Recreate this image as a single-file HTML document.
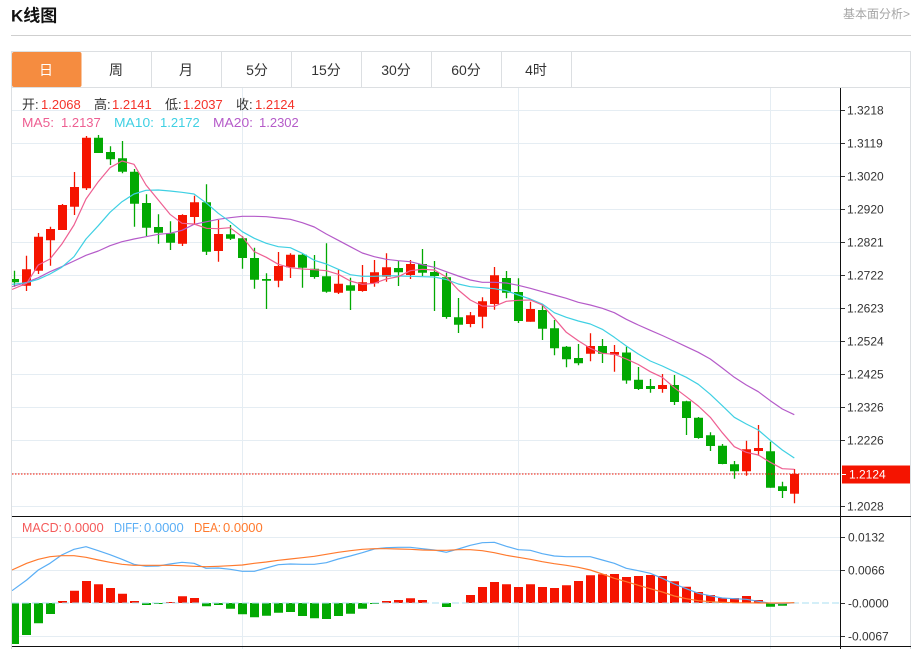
<!DOCTYPE html>
<html lang="zh">
<head>
<meta charset="utf-8">
<title>K线图</title>
<style>
html,body{margin:0;padding:0;background:#fff;}
body{width:918px;height:649px;overflow:hidden;position:relative;}
svg{position:absolute;left:0;top:0;display:block;}
text{font-family:"Liberation Sans","Noto Sans CJK SC",sans-serif;}
</style>
</head>
<body>
<svg width="918" height="649" viewBox="0 0 918 649" xmlns="http://www.w3.org/2000/svg">
<defs><clipPath id="p"><rect x="12" y="88" width="828" height="561"/></clipPath></defs>

<text x="11" y="21.5" font-size="17" font-weight="700" fill="#111">K线图</text>
<text x="843" y="18" font-size="12" fill="#a5a5a5">基本面分析&gt;</text>
<path d="M11 35.5H911" stroke="#cfcfcf" fill="none"/>

<!-- frame and tabs -->
<path d="M11.5 649V51.5H910.5V649M11.5 87.5H910.5M151.5 52V87M221.5 52V87M291.5 52V87M361.5 52V87M431.5 52V87M501.5 52V87M571.5 52V87" stroke="#dcdfe2" fill="none"/>
<rect x="12" y="52" width="69.5" height="35" rx="2" fill="#f58c40"/>
<g font-size="14" fill="#333" text-anchor="middle">
<text x="46" y="75" fill="#fff">日</text>
<text x="116" y="75">周</text>
<text x="186" y="75">月</text>
<text x="257" y="75">5分</text>
<text x="326" y="75">15分</text>
<text x="396" y="75">30分</text>
<text x="466" y="75">60分</text>
<text x="536" y="75">4时</text>
</g>

<!-- grid -->
<path d="M12 110.5H840M12 143.5H840M12 176.5H840M12 209.5H840M12 242.5H840M12 275.5H840M12 308.5H840M12 341.5H840M12 374.5H840M12 407.5H840M12 440.5H840M12 473.5H840M12 506.5H840M12 537.5H840M12 570.5H840M12 636.5H840M242.5 88V649M518.5 88V649M770.5 88V649" stroke="#e5edf3" fill="none"/>

<g clip-path="url(#p)">
<!-- wicks -->
<path fill="none" stroke="#f51400" stroke-width="1.3" d="M26.5 255.7V291M38.5 233V274M50.5 226.7V265.7M62.5 204V230M74.5 172V215M86.5 136V190M182.5 214.3V246M194.5 195.7V225M218.5 220V261.7M278.5 252V287.3M290.5 253.3V278M338.5 269.7V294M362.5 265V291.7M374.5 260V286.7M386.5 253.3V281.7M410.5 260V279M470.5 312V327.3M482.5 297.3V328.3M494.5 267V309.7M530.5 301.7V321.7M590.5 333.3V361.3M614.5 345V371.7M662.5 374V392.7M746.5 440.7V475.7M758.5 425V455.7M794.5 469V503.3"/>
<path fill="none" stroke="#02a902" stroke-width="1.3" d="M14.5 270.7V286.7M98.5 135V153M110.5 146.3V165M122.5 141V173.3M134.5 169V226.7M146.5 194.3V236M158.5 214.3V243.7M170.5 221.3V250M206.5 184.3V255M230.5 225V240M242.5 236V268.7M254.5 247.7V288.7M266.5 273.3V309M302.5 254V287.7M314.5 255V278.7M326.5 243.3V292.7M350.5 277.7V310M398.5 261V286M422.5 249V276M434.5 261V311M446.5 272.7V318.7M458.5 298V333M506.5 271V298.3M518.5 278.3V323M542.5 305V340M554.5 320V355.3M566.5 346V367.3M578.5 344V365.3M602.5 339V363M626.5 346.7V383.7M638.5 367V390M650.5 379V392.7M674.5 375V405M686.5 400.7V435M698.5 417V438.7M710.5 432.3V451M722.5 444V464.3M734.5 461V478.7M770.5 441.7V487.7M782.5 481.7V498"/>
<!-- bodies -->
<path fill="#f51400" d="M22 269.3h9V285.7h-9zM34 236.7h9V270.7h-9zM46 229h9V240.3h-9zM58 205h9V230h-9zM70 187h9V206.7h-9zM82 137.7h9V188.3h-9zM178 215h9V243.7h-9zM190 202.3h9V217h-9zM214 234h9V251h-9zM274 266h9V280.7h-9zM286 254.7h9V267.3h-9zM334 283.7h9V292.7h-9zM358 282.3h9V291h-9zM370 272.3h9V283.3h-9zM382 267.3h9V276.7h-9zM406 264h9V275h-9zM466 315.3h9V324h-9zM478 301.3h9V316.7h-9zM490 275.3h9V304h-9zM526 309h9V321.7h-9zM586 346h9V353.7h-9zM610 352h9V354.7h-9zM658 385h9V389h-9zM742 449.3h9V471.3h-9zM754 448h9V451h-9zM790 474h9V493.7h-9z"/>
<path fill="#02a902" d="M10 279h9V282.3h-9zM94 137.7h9V153h-9zM106 152h9V159.3h-9zM118 158.3h9V171.7h-9zM130 171.7h9V203.7h-9zM142 203h9V227.7h-9zM154 227h9V232.7h-9zM166 233.3h9V242.7h-9zM202 202.3h9V251.7h-9zM226 234.3h9V238.7h-9zM238 238.3h9V258h-9zM250 258h9V279.7h-9zM262 279h9V280.7h-9zM298 254.7h9V267.7h-9zM310 268.7h9V277h-9zM322 276.3h9V291.7h-9zM346 285.3h9V290.7h-9zM394 268h9V272.3h-9zM418 264h9V272.7h-9zM430 272h9V276h-9zM442 277.3h9V317h-9zM454 317.3h9V324.7h-9zM502 278h9V292.7h-9zM514 292h9V321h-9zM538 310h9V328.7h-9zM550 328.3h9V348.3h-9zM562 346.7h9V359.3h-9zM574 358h9V363.3h-9zM598 346h9V353.7h-9zM622 352.5h9V380.5h-9zM634 379.7h9V389h-9zM646 386h9V389h-9zM670 385h9V402h-9zM682 401.3h9V418h-9zM694 417.7h9V438h-9zM706 435.3h9V446h-9zM718 445.7h9V464h-9zM730 464.3h9V471.3h-9zM766 451.3h9V487.7h-9zM778 486.3h9V491h-9z"/>
<!-- MA -->
<g fill="none" stroke-width="1.2" stroke-linejoin="round">
<polyline stroke="#b55bc9" points="12,286.7 26.7,282.3 38.3,277.7 50,271.7 61.7,266.7 74,261 86,255.3 98.3,251 110,245.7 122,241.7 134,239 146,236.7 158.3,234.3 170,233.3 182,230.3 194,224.3 206.7,221.7 218.3,219.3 230,217.7 242.3,216.3 254.3,216.3 266.3,216.7 278.3,218 290.3,219.3 302.3,222.7 314.3,227 326.3,234 338.3,240.3 350.3,246.7 362.3,253 374.3,256.7 386.3,259.3 398.3,260.7 410.3,261.7 422.3,264.7 434.3,267.3 446.3,271.7 458.3,276 470.3,280 482.3,282.3 494.3,282.3 506.3,283 518.3,285.3 530.3,288.3 542.3,291.7 554.3,295 566.3,298.3 578.3,302.3 590.3,305 602.3,308.3 614.3,312.7 626.3,319.3 638.3,325 650.3,330.3 662.3,335.5 674.3,341 686.3,346.7 698.3,352.3 710.3,359 722.3,368 734.3,377.3 746.3,385 758.3,391.7 770.3,400.7 782.3,409 794.3,414.7"/>
<polyline stroke="#3fd0e3" points="12,284.3 26.7,282.7 38.3,279.3 50,274 61.7,267.3 74,256.7 86,239 98.3,225.7 110,212.3 122,201.7 134,194 146,190.3 158.3,190 170,191 182,192.3 194,194 206.7,203.3 218.3,213.3 230,221.7 242.3,231.7 254.3,238.3 266.3,243.3 278.3,246.7 290.3,247.7 302.3,253.3 314.3,260.3 326.3,264 338.3,269.3 350.3,274.7 362.3,276.3 374.3,276.3 386.3,275.7 398.3,276 410.3,276.3 422.3,276.7 434.3,277 446.3,279.5 458.3,284 470.3,286.7 482.3,287.7 494.3,288.7 506.3,290.7 518.3,295 530.3,299 542.3,304 554.3,312.7 566.3,317.3 578.3,321 590.3,324 602.3,329.3 614.3,337.3 626.3,346 638.3,354 650.3,361 662.3,366 674.3,371.7 686.3,377.3 698.3,384.3 710.3,394.3 722.3,405.7 734.3,417.3 746.3,424 758.3,430 770.3,440.3 782.3,450 794.3,458"/>
<polyline stroke="#ee5f92" points="12,289.5 26.7,283.3 38.3,265 50,259 61.7,244.3 74,225 86,199 98.3,181.7 110,167.7 122,161 134,164.3 146,185 158.3,200 170,214.3 182,223.3 194,224 206.7,228.3 218.3,228.7 230,227.7 242.3,236.7 254.3,251.7 266.3,257.3 278.3,264.3 290.3,267.7 302.3,269 314.3,269.7 326.3,270.7 338.3,274.3 350.3,281 362.3,284.3 374.3,283.3 386.3,279 398.3,276.7 410.3,270.7 422.3,269.3 434.3,270 446.3,277 458.3,290 470.3,300 482.3,306 494.3,306.3 506.3,301.3 518.3,300.3 530.3,300 542.3,305 554.3,318.3 566.3,332.3 578.3,340.7 590.3,348.3 602.3,353.3 614.3,354.3 626.3,359 638.3,364.5 650.3,371.7 662.3,377.3 674.3,387.7 686.3,396.7 698.3,406 710.3,417.3 722.3,432.7 734.3,446.7 746.3,452.3 758.3,455 770.3,462.3 782.3,468.7 794.3,469.3"/>
</g>
<!-- current price -->
<path d="M12 474H840" stroke="#f51400" stroke-dasharray="1.5 1.5" fill="none"/>

<!-- MACD -->
<path fill="#f51400" d="M58 601h9V603h-9zM70 590.7h9V603h-9zM82 581h9V603h-9zM94 584.3h9V603h-9zM106 588h9V603h-9zM118 593.7h9V603h-9zM130 601h9V603h-9zM166 602h9V603h-9zM178 596.3h9V603h-9zM190 598h9V603h-9zM382 601h9V603h-9zM394 600h9V603h-9zM406 598.3h9V603h-9zM418 600h9V603h-9zM466 595h9V603h-9zM478 587h9V603h-9zM490 582h9V603h-9zM502 584.3h9V603h-9zM514 587h9V603h-9zM526 584.3h9V603h-9zM538 587h9V603h-9zM550 588h9V603h-9zM562 585.3h9V603h-9zM574 581h9V603h-9zM586 575.3h9V603h-9zM598 574.3h9V603h-9zM610 574h9V603h-9zM622 577h9V603h-9zM634 576h9V603h-9zM646 575h9V603h-9zM658 576h9V603h-9zM670 581.3h9V603h-9zM682 586.7h9V603h-9zM694 592h9V603h-9zM706 595h9V603h-9zM718 598h9V603h-9zM730 598h9V603h-9zM742 596h9V603h-9zM754 600h9V603h-9z"/>
<path fill="#02a902" d="M12 603h7V644h-7zM22 603h9V635h-9zM34 603h9V623.3h-9zM46 603h9V614h-9zM142 603h9V605h-9zM154 603h9V604h-9zM202 603h9V606.3h-9zM214 603h9V605h-9zM226 603h9V608.7h-9zM238 603h9V614.3h-9zM250 603h9V617.3h-9zM262 603h9V615.7h-9zM274 603h9V612.7h-9zM286 603h9V612h-9zM298 603h9V616h-9zM310 603h9V618.3h-9zM322 603h9V619h-9zM334 603h9V616h-9zM346 603h9V613.7h-9zM358 603h9V608.7h-9zM370 603h9V604h-9zM442 603h9V607h-9zM766 603h9V606.7h-9zM778 603h9V605.7h-9z"/>
<path d="M12 603H840" stroke="#a9dff0" stroke-dasharray="7 3" fill="none"/>
<g fill="none" stroke-width="1.2" stroke-linejoin="round">
<polyline stroke="#5aaef5" points="12,590.7 26.7,580 38.3,570 50,563.3 61.7,555 74,549.3 86,546.7 98.3,550.7 110,554.7 122,559.3 134,564.3 146,566.3 158.3,566 170,564 182,562.3 194,563.3 206,568.3 218.3,568 230.3,569.3 242.3,571.3 254.3,571.3 266.3,568 278.3,564.7 290.3,564 302.3,564.3 314.3,564.3 326.3,562.7 338.3,559 350.3,556 362.3,552.7 374.3,549 386.3,547.7 398.3,547.3 410.3,547.3 422.3,548.7 434.3,550 446.3,552.3 458.3,549 470.3,545.3 482.3,542.7 494.3,542.3 506.3,546.3 518.3,549.7 530.3,550.3 542.3,553.7 554.3,556 566.3,556.7 578.3,556.7 590.3,556.7 602.3,560 614.3,563.3 626.3,568.3 638.3,570.7 650.3,573.3 662.3,578.3 674.3,584 686.3,588.7 698.3,593.3 710.3,595.7 722.3,598 734.3,598.7 746.3,599.3 758.3,601.3 770.3,603.3 782.3,603.7 794.3,602.7"/>
<polyline stroke="#ff7a2e" points="12,570 26.7,563.3 38.3,559.3 50,556.7 61.7,555.7 74,555.7 86,557.3 98.3,560 110,562.3 122,564.3 134,565.3 146,565.3 158.3,565.3 170,565.3 182,565.7 194,566.3 206,566.7 218.3,566.3 230.3,565.7 242.3,565 254.3,563.3 266.3,562 278.3,560.3 290.3,559 302.3,557.7 314.3,556.3 326.3,554.3 338.3,552.3 350.3,550.7 362.3,549.3 374.3,548.7 386.3,548.7 398.3,549 410.3,549.3 422.3,550 434.3,550.3 446.3,550.3 458.3,549.7 470.3,549.7 482.3,550.7 494.3,552.7 506.3,555.3 518.3,557.3 530.3,559.3 542.3,561.7 554.3,563.7 566.3,565.3 578.3,567.3 590.3,570 602.3,574 614.3,578.3 626.3,581.7 638.3,585.3 650.3,588.7 662.3,592 674.3,596 686.3,598.7 698.3,600.7 710.3,601.7 722.3,602.3 734.3,602.7 746.3,602.8 758.3,603 770.3,603 782.3,603 794.3,602.7"/>
</g>
</g>

<!-- separators / axis -->
<path d="M12 516.5H911M12 646.5H911M840.5 88V649" stroke="#111" fill="none"/>
<path d="M841 110.5h4M841 143.5h4M841 176.5h4M841 209.5h4M841 242.5h4M841 275.5h4M841 308.5h4M841 341.5h4M841 374.5h4M841 407.5h4M841 440.5h4M841 506.5h4M841 537.5h4M841 570.5h4M841 603.5h4M841 636.5h4" stroke="#333" fill="none"/>
<rect x="842" y="465.5" width="68" height="18" fill="#f51400"/>
<path d="M842 474.5h4" stroke="#fff" fill="none"/>
<g font-size="12" fill="#333">
<text x="847" y="114.5">1.3218</text>
<text x="847" y="147.5">1.3119</text>
<text x="847" y="180.5">1.3020</text>
<text x="847" y="213.5">1.2920</text>
<text x="847" y="246.5">1.2821</text>
<text x="847" y="279.5">1.2722</text>
<text x="847" y="312.5">1.2623</text>
<text x="847" y="345.5">1.2524</text>
<text x="847" y="378.5">1.2425</text>
<text x="847" y="411.5">1.2326</text>
<text x="847" y="444.5">1.2226</text>
<text x="849" y="478.5" fill="#fff">1.2124</text>
<text x="847" y="510.5">1.2028</text>
<text x="848" y="541.5">0.0132</text>
<text x="848" y="574.5">0.0066</text>
<text x="848" y="607.5">-0.0000</text>
<text x="848" y="640.5">-0.0067</text>
</g>

<!-- legends -->
<g font-size="13">
<text x="22" y="109" fill="#333">开:</text><text x="41" y="109" fill="#f5332a">1.2068</text>
<text x="94" y="109" fill="#333">高:</text><text x="112" y="109" fill="#f5332a">1.2141</text>
<text x="165" y="109" fill="#333">低:</text><text x="183" y="109" fill="#f5332a">1.2037</text>
<text x="236" y="109" fill="#333">收:</text><text x="255" y="109" fill="#f5332a">1.2124</text>
<text x="22" y="127" fill="#ee5f92" textLength="32" lengthAdjust="spacingAndGlyphs">MA5:</text><text x="61" y="127" fill="#ee5f92">1.2137</text>
<text x="114" y="127" fill="#3fd0e3" textLength="40" lengthAdjust="spacingAndGlyphs">MA10:</text><text x="160" y="127" fill="#3fd0e3">1.2172</text>
<text x="213" y="127" fill="#b55bc9" textLength="40" lengthAdjust="spacingAndGlyphs">MA20:</text><text x="259" y="127" fill="#b55bc9">1.2302</text>
<text x="22" y="532" fill="#f45a5a" textLength="40" lengthAdjust="spacingAndGlyphs">MACD:</text><text x="64" y="532" fill="#f45a5a">0.0000</text>
<text x="114" y="532" fill="#5aaef5" textLength="28" lengthAdjust="spacingAndGlyphs">DIFF:</text><text x="144" y="532" fill="#5aaef5">0.0000</text>
<text x="194" y="532" fill="#ff7a2e" textLength="27" lengthAdjust="spacingAndGlyphs">DEA:</text><text x="223" y="532" fill="#ff7a2e">0.0000</text>
</g>
</svg>
</body>
</html>
